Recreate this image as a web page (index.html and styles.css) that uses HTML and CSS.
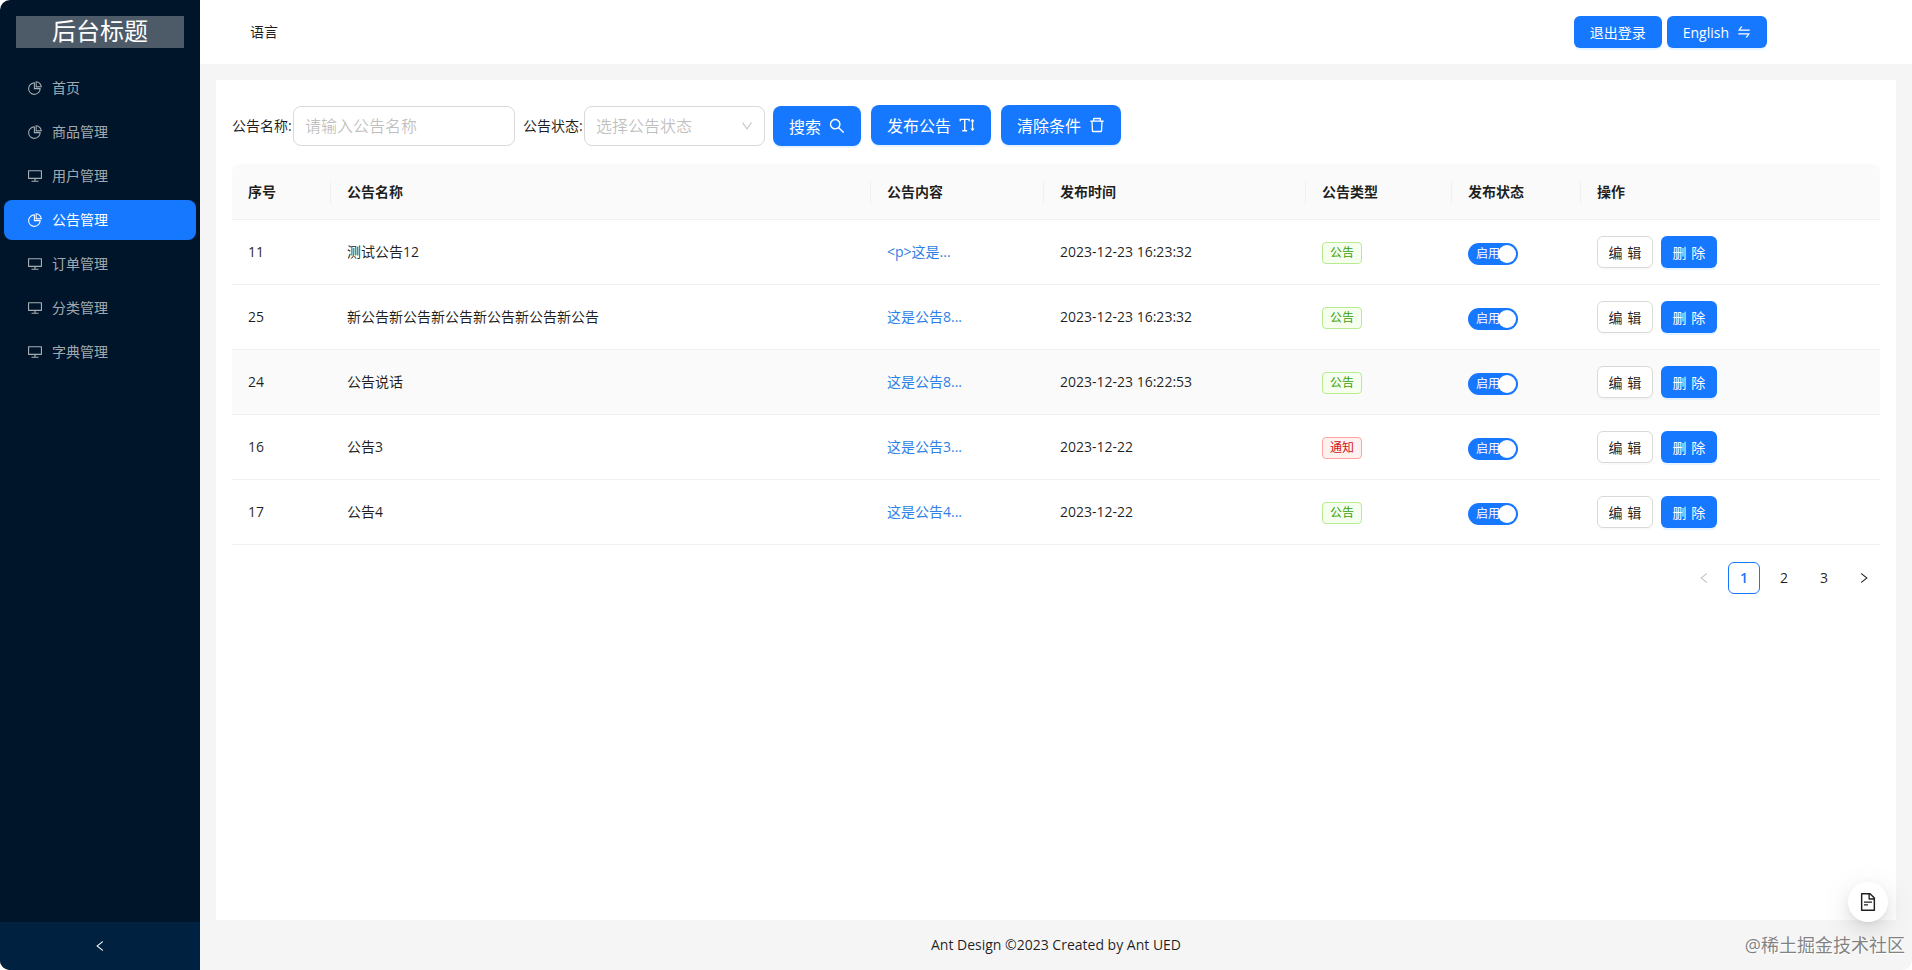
FILE: index.html
```html
<!DOCTYPE html>
<html lang="zh-CN">
<head>
    <meta charset="UTF-8">
    <meta name="viewport" content="width=device-width, initial-scale=1.0">
    <title>后台标题</title>
    <link rel="stylesheet" href="styles.css">
</head>
<body>
    <!-- Icon sprite -->
    <svg class="sprite" xmlns="http://www.w3.org/2000/svg">
        <symbol id="i-pie" viewBox="64 64 896 896"><path d="M864 518H506V160c0-4.4-3.6-8-8-8h-26a398.46 398.46 0 0 0-282.8 117.1 398.19 398.19 0 0 0-85.7 127.1A397.61 397.61 0 0 0 72 552a398.46 398.46 0 0 0 117.1 282.8c36.7 36.7 79.5 65.6 127.1 85.7A397.61 397.61 0 0 0 472 952a398.46 398.46 0 0 0 282.8-117.1c36.7-36.7 65.6-79.5 85.7-127.1A397.61 397.61 0 0 0 872 552v-26c0-4.4-3.6-8-8-8zM705.7 787.8A331.59 331.59 0 0 1 470.4 884c-88.1-.4-170.9-34.9-233.2-97.2C174.5 724.1 140 640.7 140 552c0-88.7 34.5-172.1 97.2-234.8 54.6-54.6 124.9-87.9 200.8-95.5V586h364.3c-7.7 76.3-41.3 147-96.6 201.8zM952 462.4l-2.6-28.2c-8.5-92.1-49.4-179-115.2-244.6A399.4 399.4 0 0 0 589 74.6L560.7 72c-4.7-.4-8.7 3.2-8.7 7.9V464c0 4.4 3.6 8 8 8l384-1c4.7 0 8.4-4 8-8.6zm-332.2-58.2V147.6a332.24 332.24 0 0 1 166.4 89.8c45.7 45.6 77 103.6 90 166.1l-256.4.7z"/></symbol>
        <symbol id="i-desktop" viewBox="64 64 896 896"><path d="M928 140H96c-17.7 0-32 14.3-32 32v496c0 17.7 14.3 32 32 32h380v112H304c-8.8 0-16 7.2-16 16v48c0 4.4 3.6 8 8 8h432c4.4 0 8-3.6 8-8v-48c0-8.8-7.2-16-16-16H548V700h380c17.7 0 32-14.3 32-32V172c0-17.7-14.3-32-32-32zm-40 488H136V212h752v416z"/></symbol>
        <symbol id="i-search" viewBox="64 64 896 896"><path d="M909.6 854.5L649.9 594.8C690.2 542.7 712 479 712 412c0-80.2-31.3-155.4-87.9-212.1-56.6-56.7-132-87.9-212.1-87.9s-155.5 31.3-212.1 87.9C143.2 256.5 112 331.8 112 412c0 80.1 31.3 155.5 87.9 212.1C256.5 680.8 331.8 712 412 712c67 0 130.6-21.8 182.7-62l259.7 259.6a8.2 8.2 0 0 0 11.6 0l43.6-43.5a8.2 8.2 0 0 0 0-11.6zM570.4 570.4C528 612.7 471.8 636 412 636s-116-23.3-158.4-65.6C211.3 528 188 471.8 188 412s23.3-116.1 65.6-158.4C296 211.3 352.2 188 412 188s116.1 23.2 158.4 65.6S636 352.2 636 412s-23.3 116.1-65.6 158.4z"/></symbol>
        <symbol id="i-delete" viewBox="64 64 896 896"><path d="M360 184h-8c4.4 0 8-3.6 8-8v8h304v-8c0 4.4 3.6 8 8 8h-8v72h72v-80c0-35.3-28.7-64-64-64H352c-35.3 0-64 28.7-64 64v80h72v-72zm504 72H160c-17.7 0-32 14.3-32 32v32c0 4.4 3.6 8 8 8h60.4l24.7 523c1.6 34.1 29.8 61 63.9 61h454c34.2 0 62.3-26.8 63.9-61l24.7-523H888c4.4 0 8-3.6 8-8v-32c0-17.7-14.3-32-32-32zM731.3 840H292.7l-24.2-512h487l-24.2 512z"/></symbol>
        <symbol id="i-lineheight" viewBox="64 64 896 896"><path d="M648 160H104c-4.4 0-8 3.6-8 8v128c0 4.4 3.6 8 8 8h64c4.4 0 8-3.6 8-8v-64h168v560h-92c-4.4 0-8 3.6-8 8v64c0 4.4 3.6 8 8 8h264c4.4 0 8-3.6 8-8v-64c0-4.4-3.6-8-8-8h-92V232h168v64c0 4.4 3.6 8 8 8h64c4.4 0 8-3.6 8-8V168c0-4.4-3.6-8-8-8zm272.8 546H856V318h64.8c6 0 9.4-7 5.7-11.7L825.7 178.7a7.14 7.14 0 0 0-11.3 0L713.6 306.3a7.23 7.23 0 0 0 5.7 11.7H784v388h-64.8c-6 0-9.4 7-5.7 11.7l100.8 127.5c2.9 3.7 8.5 3.7 11.3 0l100.8-127.5a7.2 7.2 0 0 0-5.7-11.7z"/></symbol>
        <symbol id="i-swap" viewBox="64 64 896 896"><path d="M847.9 592H152c-4.4 0-8 3.6-8 8v60c0 4.4 3.6 8 8 8h605.2L612.9 851c-4.1 5.2-.4 13 6.3 13h72.5c4.9 0 9.5-2.2 12.6-6.1l168.8-214.1c16.5-21 1.6-51.8-25.2-51.8zM872 356H266.8l144.3-183c4.1-5.2.4-13-6.3-13h-72.5c-4.9 0-9.5 2.2-12.6 6.1L150.9 380.2c-16.5 21-1.6 51.8 25.1 51.8h696c4.4 0 8-3.6 8-8v-60c0-4.4-3.6-8-8-8z"/></symbol>
        <symbol id="i-left" viewBox="64 64 896 896"><path d="M724 218.3V141c0-6.7-7.7-10.4-12.9-6.3L260.3 486.8a31.86 31.86 0 0 0 0 50.3l450.8 352.1c5.3 4.1 12.9.4 12.9-6.3v-77.3c0-4.9-2.3-9.6-6.1-12.6l-360-281 360-281.1c3.8-3 6.1-7.7 6.1-12.6z"/></symbol>
        <symbol id="i-right" viewBox="64 64 896 896"><path d="M765.7 486.8L314.9 134.7A7.97 7.97 0 0 0 302 141v77.3c0 4.9 2.3 9.6 6.1 12.6l360 281.1-360 281.1c-3.9 3-6.1 7.7-6.1 12.6V883c0 6.7 7.7 10.4 12.9 6.3l450.8-352.1a31.96 31.96 0 0 0 0-50.4z"/></symbol>
        <symbol id="i-down" viewBox="64 64 896 896"><path d="M884 256h-75c-5.1 0-9.9 2.5-12.9 6.6L512 654.2 227.9 262.6c-3-4.1-7.8-6.6-12.9-6.6h-75c-6.5 0-10.3 7.4-6.5 12.7l352.6 486.1c12.8 17.6 39 17.6 51.7 0l352.6-486.1c3.9-5.3.1-12.7-6.4-12.7z"/></symbol>
        <symbol id="i-file" viewBox="64 64 896 896"><path d="M854.6 288.6L639.4 73.4c-6-6-14.1-9.4-22.6-9.4H192c-17.7 0-32 14.3-32 32v832c0 17.7 14.3 32 32 32h640c17.7 0 32-14.3 32-32V311.3c0-8.5-3.4-16.7-9.4-22.7zM790.2 326H602V137.8L790.2 326zm1.8 562H232V136h302v216a42 42 0 0 0 42 42h216v494zM504 618H320c-4.4 0-8 3.6-8 8v48c0 4.4 3.6 8 8 8h184c4.4 0 8-3.6 8-8v-48c0-4.4-3.6-8-8-8zM312 490v48c0 4.4 3.6 8 8 8h384c4.4 0 8-3.6 8-8v-48c0-4.4-3.6-8-8-8H320c-4.4 0-8 3.6-8 8z"/></symbol>
    </svg>

    <div class="app">
        <!-- Sidebar -->
        <aside class="sider">
            <div class="logo">后台标题</div>
            <nav class="menu">
                <a class="menu-item"><svg class="icon"><use href="#i-pie"/></svg>首页</a>
                <a class="menu-item"><svg class="icon"><use href="#i-pie"/></svg>商品管理</a>
                <a class="menu-item"><svg class="icon"><use href="#i-desktop"/></svg>用户管理</a>
                <a class="menu-item active"><svg class="icon"><use href="#i-pie"/></svg>公告管理</a>
                <a class="menu-item"><svg class="icon"><use href="#i-desktop"/></svg>订单管理</a>
                <a class="menu-item"><svg class="icon"><use href="#i-desktop"/></svg>分类管理</a>
                <a class="menu-item"><svg class="icon"><use href="#i-desktop"/></svg>字典管理</a>
            </nav>
            <div class="sider-trigger"><svg class="icon"><use href="#i-left"/></svg></div>
        </aside>

        <div class="main">
            <!-- Header -->
            <header class="header">
                <span class="lang-label">语言</span>
                <div class="header-actions">
                    <button class="btn btn-primary btn-header">退出登录</button>
                    <button class="btn btn-primary btn-header">English <svg class="icon"><use href="#i-swap"/></svg></button>
                </div>
            </header>

            <!-- Content card -->
            <main class="card">
                <div class="filters">
                    <label class="filter-label">公告名称:</label>
                    <div class="input placeholder name-input">请输入公告名称</div>
                    <label class="filter-label">公告状态:</label>
                    <div class="input placeholder status-select">选择公告状态<svg class="icon select-arrow"><use href="#i-down"/></svg></div>
                    <button class="btn btn-primary btn-large btn-search">搜索 <svg class="icon"><use href="#i-search"/></svg></button>
                    <button class="btn btn-primary btn-large btn-raised">发布公告 <svg class="icon"><use href="#i-lineheight"/></svg></button>
                    <button class="btn btn-primary btn-large btn-raised">清除条件 <svg class="icon"><use href="#i-delete"/></svg></button>
                </div>

                <table class="table">
                    <colgroup>
                        <col class="col-id">
                        <col class="col-name">
                        <col class="col-content">
                        <col class="col-time">
                        <col class="col-type">
                        <col class="col-status">
                        <col>
                    </colgroup>
                    <thead>
                        <tr>
                            <th>序号</th>
                            <th>公告名称</th>
                            <th>公告内容</th>
                            <th>发布时间</th>
                            <th>公告类型</th>
                            <th>发布状态</th>
                            <th>操作</th>
                        </tr>
                    </thead>
                    <tbody>
                        <tr>
                            <td>11</td>
                            <td>测试公告12</td>
                            <td><a class="link">&lt;p&gt;这是...</a></td>
                            <td>2023-12-23 16:23:32</td>
                            <td><span class="tag tag-green">公告</span></td>
                            <td><span class="switch">启用<i class="knob"></i></span></td>
                            <td><div class="actions"><button class="btn btn-default btn-row">编辑</button><button class="btn btn-primary btn-row">删除</button></div></td>
                        </tr>
                        <tr>
                            <td>25</td>
                            <td>新公告新公告新公告新公告新公告新公告</td>
                            <td><a class="link">这是公告8...</a></td>
                            <td>2023-12-23 16:23:32</td>
                            <td><span class="tag tag-green">公告</span></td>
                            <td><span class="switch">启用<i class="knob"></i></span></td>
                            <td><div class="actions"><button class="btn btn-default btn-row">编辑</button><button class="btn btn-primary btn-row">删除</button></div></td>
                        </tr>
                        <tr class="row-hover">
                            <td>24</td>
                            <td>公告说话</td>
                            <td><a class="link">这是公告8...</a></td>
                            <td>2023-12-23 16:22:53</td>
                            <td><span class="tag tag-green">公告</span></td>
                            <td><span class="switch">启用<i class="knob"></i></span></td>
                            <td><div class="actions"><button class="btn btn-default btn-row">编辑</button><button class="btn btn-primary btn-row">删除</button></div></td>
                        </tr>
                        <tr>
                            <td>16</td>
                            <td>公告3</td>
                            <td><a class="link">这是公告3...</a></td>
                            <td>2023-12-22</td>
                            <td><span class="tag tag-red">通知</span></td>
                            <td><span class="switch">启用<i class="knob"></i></span></td>
                            <td><div class="actions"><button class="btn btn-default btn-row">编辑</button><button class="btn btn-primary btn-row">删除</button></div></td>
                        </tr>
                        <tr>
                            <td>17</td>
                            <td>公告4</td>
                            <td><a class="link">这是公告4...</a></td>
                            <td>2023-12-22</td>
                            <td><span class="tag tag-green">公告</span></td>
                            <td><span class="switch">启用<i class="knob"></i></span></td>
                            <td><div class="actions"><button class="btn btn-default btn-row">编辑</button><button class="btn btn-primary btn-row">删除</button></div></td>
                        </tr>
                    </tbody>
                </table>

                <div class="pagination">
                    <span class="page-item disabled"><svg class="icon"><use href="#i-left"/></svg></span>
                    <span class="page-item current">1</span>
                    <span class="page-item">2</span>
                    <span class="page-item">3</span>
                    <span class="page-item"><svg class="icon"><use href="#i-right"/></svg></span>
                </div>
            </main>

            <footer class="footer">Ant Design ©2023 Created by Ant UED</footer>
        </div>
    </div>

    <!-- Floating things over the page -->
    <div class="float-btn"><svg class="icon"><use href="#i-file"/></svg></div>
    <div class="watermark">@稀土掘金技术社区</div>
</body>
</html>
```

FILE: styles.css
```css
* {
    box-sizing: border-box;
}
html, body {
    height: 100%;
}
body {
    margin: 0;
    background-color: #fff;
    font-family: "Open Sans", "Noto Sans CJK SC", sans-serif;
    font-size: 14px;
    line-height: 22px;
    color: rgba(0, 0, 0, 0.88);
    overflow: hidden;
}
.sprite {
    display: none;
}
.icon {
    width: 14px;
    height: 14px;
    fill: currentColor;
    flex: none;
}
.app {
    display: flex;
    height: 100%;
    border-radius: 10px;
    overflow: hidden;
}

/* Sidebar */
.sider {
    width: 200px;
    flex: none;
    display: flex;
    flex-direction: column;
    background-color: #001529;
}
.logo {
    height: 32px;
    margin: 16px 16px 0;
    background-color: rgba(255, 255, 255, 0.3);
    color: #fff;
    font-size: 24px;
    line-height: 30px;
    text-align: center;
}
.menu {
    flex: 1;
    display: flex;
    flex-direction: column;
    gap: 4px;
    padding: 20px 4px 0;
}
.menu-item {
    display: flex;
    align-items: center;
    gap: 10px;
    height: 40px;
    padding-left: 24px;
    border-radius: 8px;
    color: rgba(255, 255, 255, 0.65);
}
.menu-item.active {
    background-color: #1677ff;
    color: #fff;
}
.sider-trigger {
    height: 48px;
    display: flex;
    align-items: center;
    justify-content: center;
    background-color: #002140;
    color: #fff;
}
.sider-trigger .icon {
    width: 12px;
    height: 12px;
}

/* Header */
.main {
    flex: 1;
    display: flex;
    flex-direction: column;
    min-width: 0;
    background-color: #f5f5f5;
}
.header {
    height: 64px;
    flex: none;
    display: flex;
    align-items: center;
    justify-content: space-between;
    padding: 0 145px 0 50px;
    background-color: #fff;
}
.lang-label {
    font-size: 14px;
}
.header-actions {
    display: flex;
    gap: 5px;
}

/* Buttons */
.btn {
    display: inline-flex;
    align-items: center;
    justify-content: center;
    gap: 8px;
    border: 1px solid transparent;
    font-family: inherit;
    cursor: pointer;
    white-space: nowrap;
}
.btn-primary {
    background-color: #1677ff;
    color: #fff;
    box-shadow: 0 2px 0 rgba(5, 145, 255, 0.1);
}
.btn-default {
    background-color: #fff;
    border-color: #d9d9d9;
    color: rgba(0, 0, 0, 0.88);
    box-shadow: 0 2px 0 rgba(0, 0, 0, 0.02);
}
.btn-header {
    height: 32px;
    padding: 0 15px;
    border-radius: 6px;
    font-size: 14px;
}
.btn-large {
    height: 40px;
    padding: 0 15px;
    border-radius: 8px;
    font-size: 16px;
}
.btn-large .icon {
    width: 16px;
    height: 16px;
}
.btn-raised {
    position: relative;
    top: -1px;
}
.btn-row {
    width: 56px;
    height: 32px;
    padding: 0;
    border-radius: 6px;
    font-size: 14px;
    letter-spacing: 0.34em;
    text-indent: 0.34em;
}

/* Content card */
.card {
    flex: 1;
    margin: 16px 16px 0;
    padding: 26px 16px 0;
    background-color: #fff;
}
.filters {
    display: flex;
    align-items: center;
    height: 40px;
    margin-bottom: 18px;
}
.filter-label {
    width: 61px;
    white-space: nowrap;
}
.input {
    height: 40px;
    padding: 0 11px;
    border: 1px solid #d9d9d9;
    border-radius: 8px;
    font-size: 16px;
    line-height: 38px;
    background-color: #fff;
}
.placeholder {
    color: rgba(0, 0, 0, 0.25);
}
.name-input {
    width: 222px;
    margin-right: 8px;
}
.status-select {
    position: relative;
    width: 181px;
    margin-right: 8px;
}
.select-arrow {
    position: absolute;
    right: 11px;
    top: 13px;
    width: 12px;
    height: 12px;
}
.btn-search {
    margin-right: 10px;
}
.btn-raised + .btn-raised {
    margin-left: 10px;
}

/* Table */
.table {
    width: 100%;
    table-layout: fixed;
    border-collapse: separate;
    border-spacing: 0;
}
.col-id { width: 99px; }
.col-name { width: 540px; }
.col-content { width: 173px; }
.col-time { width: 262px; }
.col-type { width: 146px; }
.col-status { width: 129px; }
.table th {
    position: relative;
    height: 56px;
    padding: 0 16px;
    text-align: left;
    font-weight: 600;
    background-color: #fafafa;
    border-bottom: 1px solid #f0f0f0;
}
.table th:first-child {
    border-top-left-radius: 8px;
}
.table th:last-child {
    border-top-right-radius: 8px;
}
.table th:not(:last-child)::after {
    content: "";
    position: absolute;
    top: 18px;
    right: 0;
    width: 1px;
    height: 22px;
    background-color: #f0f0f0;
}
.table td {
    height: 65px;
    padding: 0 16px;
    border-bottom: 1px solid #f0f0f0;
}
.row-hover td {
    background-color: #fafafa;
}
.link {
    color: #2f7fe6;
}
.tag {
    display: inline-block;
    height: 22px;
    padding: 0 7px;
    border: 1px solid;
    border-radius: 4px;
    font-size: 12px;
    line-height: 20px;
    vertical-align: middle;
}
.tag-green {
    color: #389e0d;
    background-color: #f6ffed;
    border-color: #b7eb8f;
}
.tag-red {
    color: #cf1322;
    background-color: #fff1f0;
    border-color: #ffa39e;
}
.switch {
    position: relative;
    display: block;
    width: 50px;
    height: 22px;
    margin-top: 4px;
    padding-left: 8px;
    border-radius: 11px;
    background-color: #1677ff;
    color: #fff;
    font-size: 12px;
    line-height: 22px;
}
.knob {
    position: absolute;
    top: 2px;
    right: 2px;
    width: 18px;
    height: 18px;
    border-radius: 50%;
    background-color: #fff;
}
.actions {
    display: flex;
    gap: 8px;
}

/* Pagination */
.pagination {
    display: flex;
    justify-content: flex-end;
    gap: 8px;
    margin-top: 17px;
}
.page-item {
    width: 32px;
    height: 32px;
    display: flex;
    align-items: center;
    justify-content: center;
    border-radius: 6px;
    line-height: 30px;
}
.page-item .icon {
    width: 12px;
    height: 12px;
}
.page-item.disabled {
    color: rgba(0, 0, 0, 0.25);
}
.page-item.current {
    border: 1px solid #1677ff;
    color: #1677ff;
    font-weight: 600;
}

/* Footer */
.footer {
    height: 50px;
    flex: none;
    display: flex;
    align-items: center;
    justify-content: center;
    color: rgba(0, 0, 0, 0.88);
}

/* Overlays */
.float-btn {
    position: absolute;
    right: 24px;
    bottom: 48px;
    width: 40px;
    height: 40px;
    display: flex;
    align-items: center;
    justify-content: center;
    border-radius: 50%;
    background-color: #fff;
    box-shadow: 0 6px 16px rgba(0, 0, 0, 0.08), 0 3px 6px -4px rgba(0, 0, 0, 0.12), 0 9px 28px 8px rgba(0, 0, 0, 0.05);
}
.float-btn .icon {
    width: 18px;
    height: 18px;
}
.watermark {
    position: absolute;
    right: 7px;
    bottom: 13px;
    font-size: 18px;
    line-height: 24px;
    color: rgba(90, 90, 90, 0.75);
    text-shadow: 1px 1px 1px #fff;
    white-space: nowrap;
}
```
